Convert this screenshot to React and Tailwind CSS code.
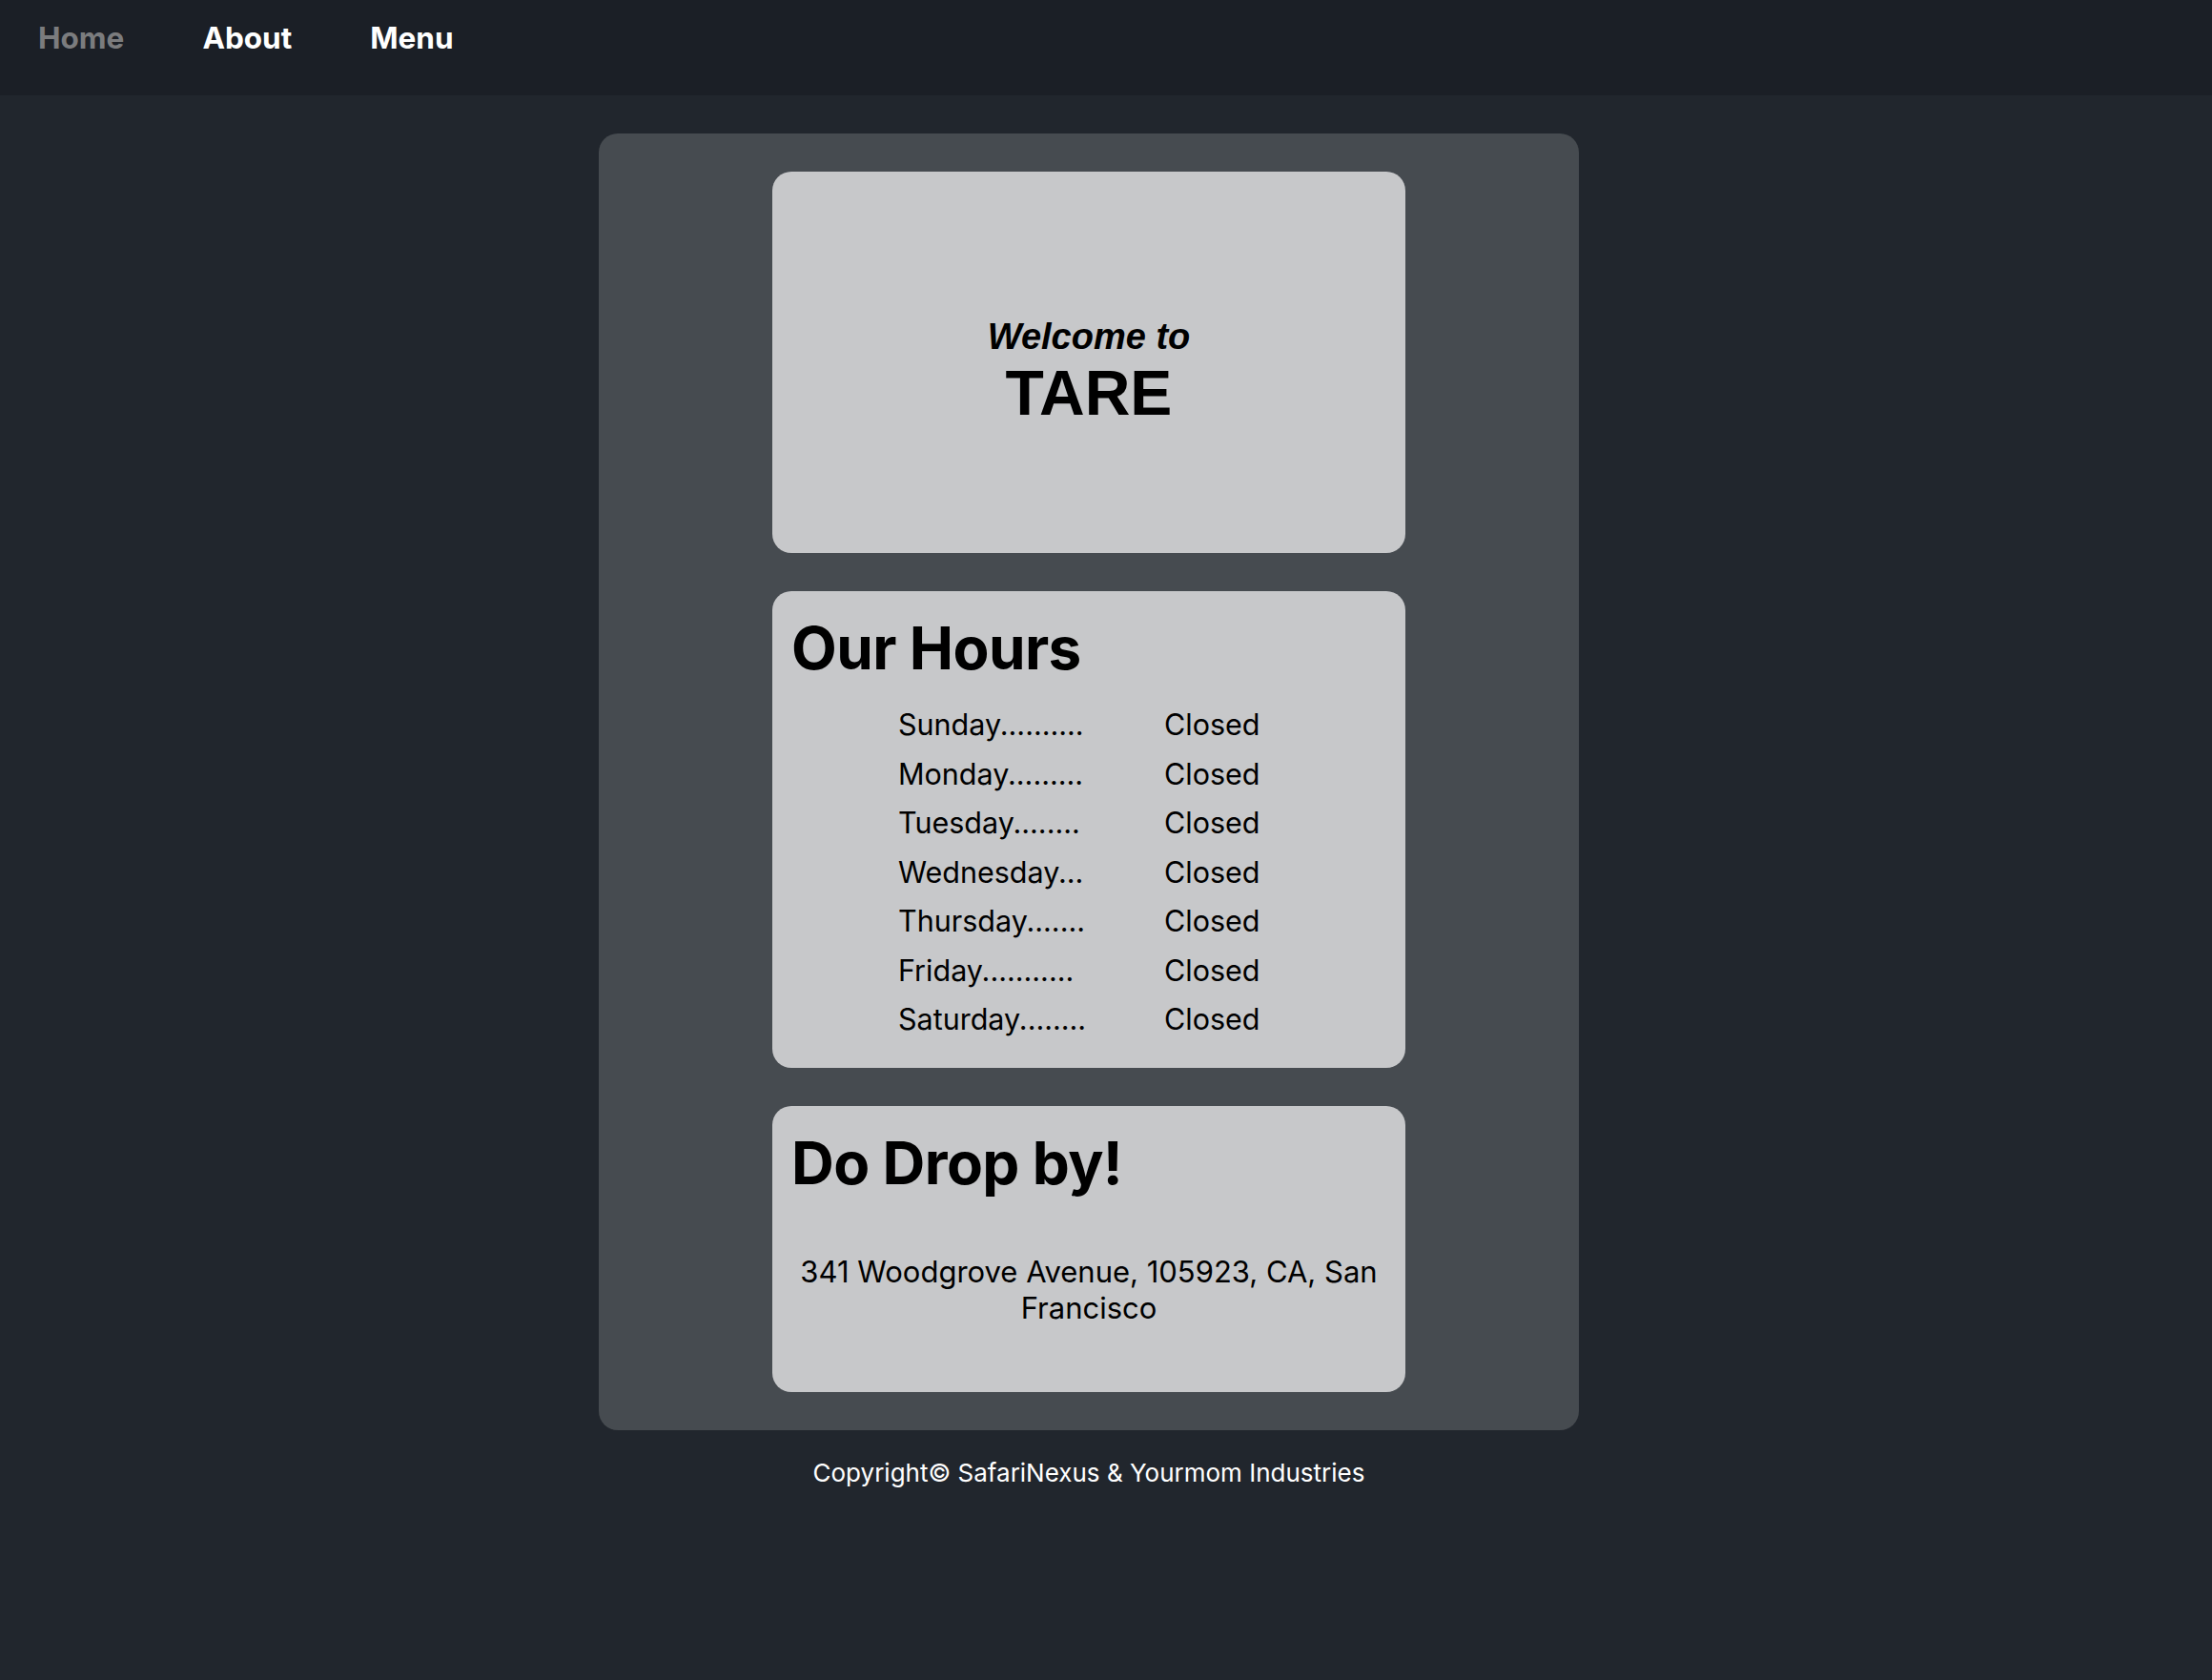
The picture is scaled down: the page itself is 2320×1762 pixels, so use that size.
// App.jsx — TARE restaurant landing page: nav, welcome card, hours, address, footer.

const hours = [
  ['Sunday..........', 'Closed'],
  ['Monday.........', 'Closed'],
  ['Tuesday........', 'Closed'],
  ['Wednesday...', 'Closed'],
  ['Thursday.......', 'Closed'],
  ['Friday...........', 'Closed'],
  ['Saturday........', 'Closed'],
];

function NavBar() {
  return (
    <nav className="h-[100px] bg-[#1b1f26] pl-[40px] pt-[21px] flex items-start gap-[82px] text-[31.5px] font-bold leading-[38px]">
      <span className="text-[#7b7c7e] cursor-pointer">Home</span>
      <span className="text-white cursor-pointer">About</span>
      <span className="text-white cursor-pointer">Menu</span>
    </nav>
  );
}

function Card({ className = '', children }) {
  return (
    <section className={`w-[664px] bg-[#c7c8ca] rounded-[20px] text-black ${className}`}>
      {children}
    </section>
  );
}

export default function App() {
  return (
    <div className="min-h-screen bg-[#21262d] font-['Inter','Noto_Sans',sans-serif]">
      <NavBar />

      <main className="pr-[36px] pt-[40px] pb-[80px] flex flex-col items-center">
        <div className="w-[1028px] bg-[#464b50] rounded-[20px] py-[40px] flex flex-col items-center gap-[40px]">
          <Card className="h-[400px] flex flex-col items-center justify-center pt-[21px] font-['Liberation_Sans',Arial,sans-serif]">
            <h3 className="text-[38px] font-bold italic leading-[1.15]">Welcome to</h3>
            <h1 className="text-[66px] font-bold leading-[1.1]">TARE</h1>
          </Card>

          <Card className="px-[20px] pt-[22px] pb-[25px]">
            <h1 className="text-[62px] font-bold tracking-[-0.01em] leading-[75px] mb-[17px]">Our Hours</h1>
            <div className="ml-[112px] grid grid-cols-[279px_auto] text-[30.5px] leading-[51.5px]">
              {hours.map(([day, status]) => (
                <div key={day} className="contents">
                  <span>{day}</span>
                  <span>{status}</span>
                </div>
              ))}
            </div>
          </Card>

          <Card className="px-[20px] pt-[22px] pb-[68px]">
            <h1 className="text-[62px] font-bold tracking-[-0.01em] leading-[75px]">Do Drop by!</h1>
            <p className="mt-[58px] text-center text-[31px] leading-[38.5px]">
              341 Woodgrove Avenue, 105923, CA, San Francisco
            </p>
          </Card>
        </div>

        <footer className="mt-[29px] text-white text-[26px] leading-[31px]">
          Copyright© SafariNexus &amp; Yourmom Industries
        </footer>
      </main>
    </div>
  );
}
